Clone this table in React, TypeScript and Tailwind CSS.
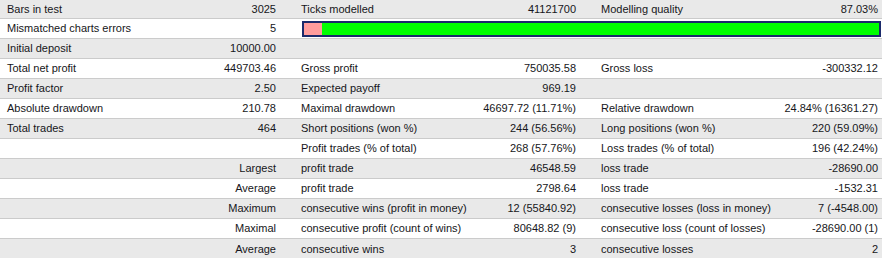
const rows: string[][] = [
  ["Bars in test", "3025", "Ticks modelled", "41121700", "Modelling quality", "87.03%"],
  ["Mismatched charts errors", "5"],
  ["Initial deposit", "10000.00", "", "", "", ""],
  ["Total net profit", "449703.46", "Gross profit", "750035.58", "Gross loss", "-300332.12"],
  ["Profit factor", "2.50", "Expected payoff", "969.19", "", ""],
  ["Absolute drawdown", "210.78", "Maximal drawdown", "46697.72 (11.71%)", "Relative drawdown", "24.84% (16361.27)"],
  ["Total trades", "464", "Short positions (won %)", "244 (56.56%)", "Long positions (won %)", "220 (59.09%)"],
  ["", "", "Profit trades (% of total)", "268 (57.76%)", "Loss trades (% of total)", "196 (42.24%)"],
  ["", "Largest", "profit trade", "46548.59", "loss trade", "-28690.00"],
  ["", "Average", "profit trade", "2798.64", "loss trade", "-1532.31"],
  ["", "Maximum", "consecutive wins (profit in money)", "12 (55840.92)", "consecutive losses (loss in money)", "7 (-4548.00)"],
  ["", "Maximal", "consecutive profit (count of wins)", "80648.82 (9)", "consecutive loss (count of losses)", "-28690.00 (1)"],
  ["", "Average", "consecutive wins", "3", "consecutive losses", "2"],
];

function QualityBar() {
  return (
    <div className="flex-1 flex items-center pl-[22px] pr-[1px]">
      <div className="flex h-[16px] w-full border-2 border-[#1b2a6b]">
        <div className="w-[18px] bg-[#ff9c9c]" />
        <div className="flex-1 bg-[#00ff00]" />
      </div>
    </div>
  );
}

export default function App() {
  return (
    <div
      className="w-[882px] h-[258px] bg-white text-[11px] text-[#161620] overflow-hidden"
      style={{ fontFamily: '"Liberation Sans", Arial, sans-serif' }}
    >
      {rows.map((r, i) => (
        <div
          key={i}
          className={`flex items-center ${i === 0 ? "h-[19px]" : "h-[20px]"} ${
            i % 2 === 0 ? "bg-[#e9e9e9]" : "bg-white"
          } ${i < rows.length - 1 ? "border-b border-[#cbcbcb]" : ""}`}
        >
          <div className="w-[280px] flex items-center">
            <span className="flex-1 pl-[7px] whitespace-nowrap">{r[0]}</span>
            <span className="pr-[4px] whitespace-nowrap">{r[1]}</span>
          </div>
          {r.length === 2 ? (
            <QualityBar />
          ) : (
            <>
              <div className="w-[300px] flex items-center">
                <span className="flex-1 pl-[21px] whitespace-nowrap">{r[2]}</span>
                <span className="pr-[4px] whitespace-nowrap">{r[3]}</span>
              </div>
              <div className="w-[302px] flex items-center">
                <span className="flex-1 pl-[21px] whitespace-nowrap">{r[4]}</span>
                <span className="pr-[4px] whitespace-nowrap">{r[5]}</span>
              </div>
            </>
          )}
        </div>
      ))}
    </div>
  );
}
